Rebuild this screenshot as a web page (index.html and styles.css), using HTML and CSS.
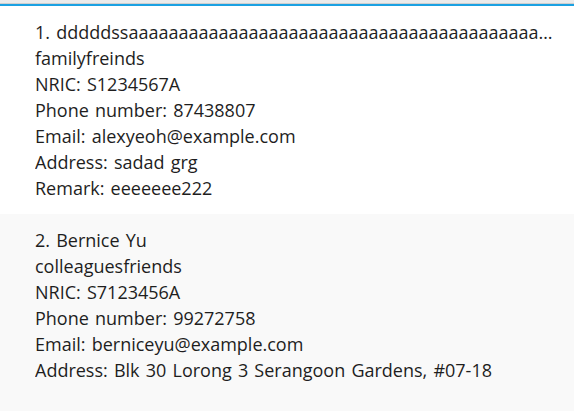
FILE: index.html
```html
<!DOCTYPE html>
<html>
<head>
<meta charset="utf-8">
<link rel="stylesheet" href="styles.css">
</head>
<body>
<div class="frame">
  <div class="top-line"></div>
  <div class="accent"></div>
  <ul class="list">
    <li class="card">
      <div class="line name">1. dddddssaaaaaaaaaaaaaaaaaaaaaaaaaaaaaaaaaaaaaaaaaaaaaaaaaaaaaaaaaaaaaaaaaaaaaaaa</div>
      <div class="line">familyfreinds</div>
      <div class="line">NRIC: S1234567A</div>
      <div class="line">Phone number: 87438807</div>
      <div class="line">Email: alexyeoh@example.com</div>
      <div class="line">Address: sadad grg</div>
      <div class="line">Remark: eeeeeee222</div>
    </li>
    <li class="card alt">
      <div class="line name">2. Bernice Yu</div>
      <div class="line">colleaguesfriends</div>
      <div class="line">NRIC: S7123456A</div>
      <div class="line">Phone number: 99272758</div>
      <div class="line">Email: berniceyu@example.com</div>
      <div class="line">Address: Blk 30 Lorong 3 Serangoon Gardens, #07-18</div>
    </li>
  </ul>
</div>
</body>
</html>
```
FILE: styles.css
```css
html, body {
  margin: 0;
  padding: 0;
  height: 100%;
}
body {
  background: #f9f9f9;
  font-family: "Open Sans", "Noto Sans", sans-serif;
  color: #1e1e1e;
}
.frame {
  display: flex;
  flex-direction: column;
  min-height: 100%;
}
.top-line {
  height: 3px;
  background: #ebebeb;
  border-bottom: 1px solid #cfcfcf;
}
.accent {
  height: 2px;
  background: #1ba1e2;
}
.list {
  list-style: none;
  margin: 0;
  padding: 0;
}
.card {
  background: #ffffff;
  padding: 13px 20px 13px 35px;
}
.card.alt {
  background: #f9f9f9;
}
.line {
  font-size: 18px;
  line-height: 26px;
  word-spacing: 1.5px;
  white-space: nowrap;
  overflow: hidden;
  text-overflow: ellipsis;
}
```
